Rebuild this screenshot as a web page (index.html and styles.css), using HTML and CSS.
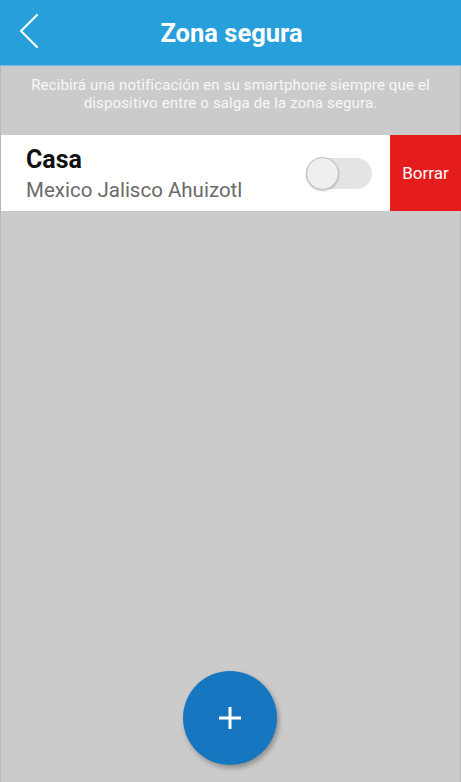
FILE: index.html
```html
<!DOCTYPE html>
<html lang="es">
<head>
<meta charset="utf-8">
<title>Zona segura</title>
<link rel="stylesheet" href="styles.css">
</head>
<body>
<div class="screen">
  <header class="topbar">
    <button class="back" aria-label="Atrás">
      <svg width="20" height="34" viewBox="0 0 20 34"><path d="M18 1 L2 17 L18 33" fill="none" stroke="#fff" stroke-width="2.2" stroke-linecap="round" stroke-linejoin="round"/></svg>
    </button>
    <h1 class="title">Zona segura</h1>
  </header>
  <main class="content">
    <p class="notice">Recibirá una notificación en su smartphone siempre que el dispositivo entre o salga de la zona segura.</p>
    <div class="zone-row">
      <div class="zone-main">
        <div class="zone-text">
          <div class="zone-name">Casa</div>
          <div class="zone-addr">Mexico Jalisco Ahuizotl</div>
        </div>
        <div class="toggle"><span class="thumb"></span></div>
      </div>
      <div class="delete">Borrar</div>
    </div>
    <div class="spacer"></div>
    <div class="fab-wrap">
      <button class="fab" aria-label="Agregar">
        <svg width="24" height="24" viewBox="0 0 24 24"><path d="M12 1 V23 M1 12 H23" stroke="#fff" stroke-width="3"/></svg>
      </button>
    </div>
  </main>
</div>
</body>
</html>
```
FILE: styles.css
```css
html, body {
  margin: 0;
  padding: 0;
}
body {
  font-family: Roboto, "Liberation Sans", sans-serif;
  background: #cbcbcb;
}
.screen {
  width: 461px;
  height: 782px;
  display: flex;
  flex-direction: column;
  overflow: hidden;
}
.topbar {
  height: 65px;
  background: #279fdb;
  border-bottom: 1px solid #6fbde6;
  display: flex;
  align-items: center;
  justify-content: center;
  position: relative;
  flex-shrink: 0;
}
.back {
  position: absolute;
  left: 19px;
  top: 14px;
  background: none;
  border: 0;
  padding: 0;
  width: 20px;
  height: 34px;
  display: block;
}
.back svg { display: block; }
.title {
  margin: 0;
  color: #fff;
  font-size: 25.5px;
  font-weight: 700;
  padding-left: 2px;
}
.content {
  flex: 1;
  display: flex;
  flex-direction: column;
  background: #cbcbcb;
  border-left: 1px solid #b9b9b9;
  border-right: 1px solid #b9b9b9;
}
.notice {
  margin: 10px 0 23px;
  padding: 0 14px;
  text-align: center;
  color: #f8f8f8;
  font-size: 15px;
  letter-spacing: 0.15px;
  line-height: 18px;
}
.zone-row {
  display: flex;
  height: 76px;
  background: #fff;
  margin-right: -1px;
}
.zone-main {
  flex: 1;
  display: flex;
  align-items: center;
  padding-left: 25px;
  padding-right: 18px;
}
.zone-text {
  flex: 1;
  display: flex;
  flex-direction: column;
  padding-top: 3px;
}
.zone-name {
  font-size: 25px;
  font-weight: 700;
  color: #111;
  line-height: 28px;
}
.zone-addr {
  font-size: 20.5px;
  color: #6a6a6a;
  line-height: 26px;
  margin-top: 3px;
}
.toggle {
  width: 66px;
  height: 31px;
  border-radius: 16px;
  background: #e4e4e4;
  position: relative;
}
.thumb {
  position: absolute;
  left: 0;
  top: -1px;
  width: 31px;
  height: 31px;
  border-radius: 50%;
  background: #efefef;
  border: 1px solid #bdbdbd;
  box-shadow: 0 1px 2px rgba(0,0,0,0.2);
}
.delete {
  width: 71px;
  background: #e51c1c;
  color: #fff;
  font-size: 17px;
  display: flex;
  align-items: center;
  justify-content: center;
}
.spacer { flex: 1; }
.fab-wrap {
  display: flex;
  justify-content: center;
  padding-bottom: 17px;
  padding-right: 1px;
}
.fab {
  width: 94px;
  height: 94px;
  border-radius: 50%;
  border: 0;
  padding: 0;
  background: #1677c0;
  box-shadow: 2px 3px 5px rgba(0,0,0,0.3);
  display: flex;
  align-items: center;
  justify-content: center;
}
.fab svg { display: block; }
```
